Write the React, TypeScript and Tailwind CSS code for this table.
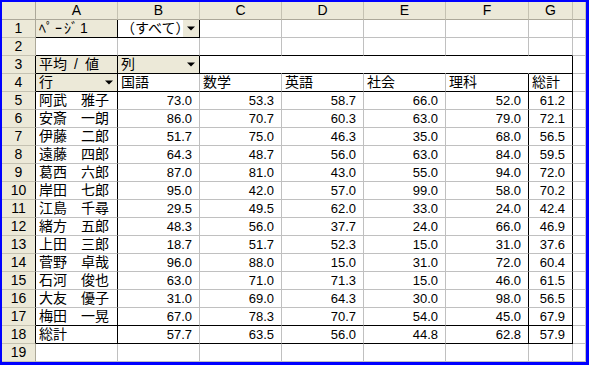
import React from "react";

const COLS = ["A", "B", "C", "D", "E", "F", "G", ""];
const names = [
  "阿武　雅子", "安斎　一朗", "伊藤　二郎", "遠藤　四郎", "葛西　六郎", "岸田　七郎", "江島　千尋",
  "緒方　五郎", "上田　三郎", "菅野　卓哉", "石河　俊也", "大友　優子", "梅田　一晃",
];
const data = [
  ["73.0", "53.3", "58.7", "66.0", "52.0", "61.2"],
  ["86.0", "70.7", "60.3", "63.0", "79.0", "72.1"],
  ["51.7", "75.0", "46.3", "35.0", "68.0", "56.5"],
  ["64.3", "48.7", "56.0", "63.0", "84.0", "59.5"],
  ["87.0", "81.0", "43.0", "55.0", "94.0", "72.0"],
  ["95.0", "42.0", "57.0", "99.0", "58.0", "70.2"],
  ["29.5", "49.5", "62.0", "33.0", "24.0", "42.4"],
  ["48.3", "56.0", "37.7", "24.0", "66.0", "46.9"],
  ["18.7", "51.7", "52.3", "15.0", "31.0", "37.6"],
  ["96.0", "88.0", "15.0", "31.0", "72.0", "60.4"],
  ["63.0", "71.0", "71.3", "15.0", "46.0", "61.5"],
  ["31.0", "69.0", "64.3", "30.0", "98.0", "56.5"],
  ["67.0", "78.3", "70.7", "54.0", "45.0", "67.9"],
];
const totals = ["57.7", "63.5", "56.0", "44.8", "62.8", "57.9"];
const heads = ["国語", "数学", "英語", "社会", "理科", "総計"];

type Cell = { text?: React.ReactNode; right?: boolean; field?: boolean; drop?: boolean };

function getCell(r: number, c: number): Cell {
  if (c === 7) return {};
  if (r === 1) {
    if (c === 0) return { text: <span className="tracking-[2px]">ﾍﾟｰｼﾞ1</span>, field: true };
    if (c === 1) return { text: "（すべて）", drop: true };
  }
  if (r === 3) {
    if (c === 0)
      return {
        text: (
          <>
            平均<span className="px-[7px]">/</span>値
          </>
        ),
        field: true,
      };
    if (c === 1) return { text: "列", field: true, drop: true };
  }
  if (r === 4) {
    if (c === 0) return { text: "行", field: true, drop: true };
    if (c >= 1 && c <= 6) return { text: heads[c - 1] };
  }
  if (r >= 5 && r <= 17) {
    if (c === 0) return { text: names[r - 5] };
    return { text: data[r - 5][c - 1], right: true };
  }
  if (r === 18) {
    if (c === 0) return { text: "総計" };
    return { text: totals[c - 1], right: true };
  }
  return {};
}

function blackBottom(r: number, c: number) {
  if (c > 6) return false;
  if (r === 1 && c <= 1) return true;
  if ((r === 2 || r === 3 || r === 4 || r === 17 || r === 18) && c <= 6) return true;
  return false;
}
function rightColor(r: number, c: number): "black" | "white" | "gray" {
  if (r === 1 && c <= 1) return "black";
  if (r >= 3 && r <= 18) {
    if (c === 0) return "black";
    if (c === 6) return "black";
    if (c === 5 && r >= 4) return "black";
    if (r === 3) {
      if (c === 1) return "black";
      if (c >= 2 && c <= 5) return "white";
    }
  }
  return "gray";
}

function Arrow() {
  return (
    <div className="absolute right-0 top-0 bottom-0 w-[16px] bg-[#ece9d8] flex items-center justify-center">
      <svg width="8" height="5" viewBox="0 0 8 5">
        <polygon points="0,0.5 8,0.5 4,4.5" fill="#000" />
      </svg>
    </div>
  );
}

export default function App() {
  const rows = Array.from({ length: 19 }, (_, i) => i + 1);
  return (
    <div
      className="w-[589px] h-[365px] bg-[#0000ff] pl-[2px] pt-[2px] pr-[3px] pb-[3px] overflow-hidden"
      style={{ fontFamily: '"Liberation Sans", "Noto Sans CJK JP", sans-serif' }}
    >
      <div className="w-[584px] h-[360px] bg-white grid grid-cols-[34px_82px_82px_82px_82px_82px_83px_44px_13px] grid-rows-[repeat(20,18px)] text-[14px] text-black">
        <div className="bg-[#ece9d8] border-r border-b border-r-[#aca899] border-b-[#aca899]" />
        {COLS.map((h, i) => (
          <div
            key={"h" + i}
            className="bg-[#ece9d8] border-r border-b border-r-[#c5c2b2] border-b-[#aca899] flex items-center justify-center leading-[17px]"
          >
            {h}
          </div>
        ))}
        {rows.map((r) => (
          <React.Fragment key={r}>
            <div
              className={
                "bg-[#ece9d8] border-b border-b-[#c5c2b2] border-r flex items-center justify-center leading-[17px] " +
                (r >= 3 && r <= 18 ? "border-r-black" : "border-r-[#aca899]")
              }
            >
              {r}
            </div>
            {COLS.map((_, c) => {
              const cell = getCell(r, c);
              const rc = rightColor(r, c);
              const bb = blackBottom(r, c);
              return (
                <div
                  key={c}
                  className={
                    "relative border-r border-b flex items-center leading-[17px] whitespace-nowrap overflow-hidden " +
                    (rc === "black" ? "border-r-black " : rc === "white" ? "border-r-white " : "border-r-[#c0c0c0] ") +
                    (bb ? "border-b-black " : "border-b-[#c0c0c0] ") +
                    (cell.field ? "bg-[#ece9d8] " : "") +
                    (cell.right ? "justify-end pr-[7px] text-[13px] " : "pl-[3px] ")
                  }
                >
                  {cell.text}
                  {cell.drop && <Arrow />}
                </div>
              );
            })}
          </React.Fragment>
        ))}
      </div>
    </div>
  );
}
